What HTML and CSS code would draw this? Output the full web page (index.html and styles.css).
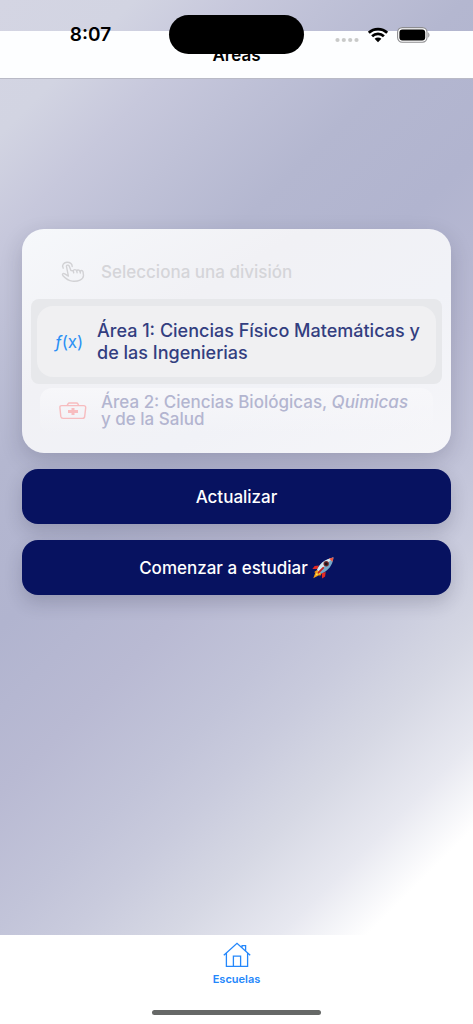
FILE: index.html
```html
<!DOCTYPE html>
<html lang="es">
<head>
<meta charset="utf-8">
<meta name="viewport" content="width=device-width, initial-scale=1">
<title>Áreas</title>
<link rel="stylesheet" href="styles.css">
</head>
<body>
<div class="app">
  <header class="navbar"><h1 class="navbar-title">Áreas</h1></header>

  <div class="status">
    <div class="status-side"><time class="clock">8:07</time></div>
    <div class="island"></div>
    <div class="status-side status-icons">
      <svg class="dots" width="24" height="6" viewBox="0 0 24 6" fill="#c9cac9"><circle cx="2.5" cy="3" r="2.1"/><circle cx="8.8" cy="3" r="2.1"/><circle cx="15.2" cy="3" r="2.1"/><circle cx="21.5" cy="3" r="2.1"/></svg>
      <svg width="22" height="16" viewBox="0 0 22 16"><g fill="none" stroke="#000" stroke-width="2.7"><path d="M1.8 5.8a13.2 13.2 0 0 1 18.4 0"/><path d="M5.1 9.3a8.5 8.5 0 0 1 11.8 0"/></g><path d="M11 15.2 7.6 11.8a4.9 4.9 0 0 1 6.8 0z"/></svg>
      <svg width="34" height="16" viewBox="0 0 34 16"><rect x=".6" y=".6" width="29.4" height="14.6" rx="4.6" fill="#fff" stroke="#8d8d90" stroke-width="1.1"/><rect x="2.4" y="2.4" width="25.8" height="11" rx="3"/><path d="M31.2 5.4c1.7.6 1.7 4.4 0 5z" fill="#9b9b9d"/></svg>
    </div>
  </div>

  <main class="content">
    <div class="picker" role="listbox" aria-label="División">
      <button class="option option-hint" type="button" role="option" aria-selected="false">
        <svg class="option-icon" width="26" height="22" viewBox="0 0 26 22" fill="none" stroke="#d2d2d5" stroke-width="1.4" stroke-linecap="round" stroke-linejoin="round"><path d="M3.2 7.2C1.3 3.6 4.3 1.4 7 1.3c3.1-.1 5.2 1.5 5.2 4.2"/><path d="m8.4 15.1-3.6-2.3c-1.9-1-3.1.6-1.8 1.9 2.3 2.5 5.2 4.9 9.2 5.4 5.8.8 11.2-1.4 11.3-5.6L23 10.7c-.4-1.6-2.6-1.7-2.9-.2-.4-1.8-3-2-3.4-.6-.5-1.7-3.2-1.7-3.4-.1L10.9 9.6 9.2 5.1C8.5 3.5 6 4 6.5 5.7z"/><path d="m13.3 9.8.4 2M16.7 9.9l.4 1.8M20.1 10.5l.3 1.5"/></svg>
        <span>Selecciona una división</span>
      </button>
      <div class="selection">
        <button class="option option-current" type="button" role="option" aria-selected="true">
          <span class="option-icon fx"><i>ƒ</i>(x)</span>
          <span>Área 1: Ciencias Físico Matemáticas y de las Ingenierias</span>
        </button>
      </div>
      <button class="option option-next" type="button" role="option" aria-selected="false">
        <svg class="option-icon" width="28" height="18" viewBox="0 0 28 18" fill="none" stroke="#f7bcbf" stroke-width="1.4"><path d="M2.8 3.6h21.9q2 0 2 2l-1 8.8q-.2 2-2.2 2H4.1q-2 0-2.3-2L.9 5.6q-.1-2 1.9-2z"/><path d="M8.3 3.4 9 1.9Q9.3 1 10.6 1h6.7q1.3 0 1.6.9l.7 1.5"/><path d="M14 6v7M9 9.5h10" stroke-width="3"/></svg>
        <span>Área 2: Ciencias Biológicas, <em>Quimicas</em><br>y de la Salud</span>
      </button>
    </div>
    <button class="action" type="button">Actualizar</button>
    <button class="action" type="button">Comenzar a estudiar
      <svg width="22" height="22" viewBox="0 0 22 22" role="img" aria-label="Cohete"><path d="m7 8.4-4.3.7L.3 12l5.3.1zM13.7 15l-.6 4.4-3 2-.3-5.3z" fill="#e32b24"/><path d="M5.7 12.5 2 15.2l1.4.3-2.1 5.7 6.2-3.1.3 1.3 2.2-4z" fill="#f39b18"/><path d="m5.8 14-2.4 4.8 4.7-2.5z" fill="#ffed4c"/><path d="M5.1 12.7C7.5 7.2 12 2.2 21.5.4c-1 8.4-5.5 13.4-12.4 16.2z" fill="#75a8c8"/><path d="M5.1 12.7C7.5 7.2 12 2.2 21.5.4L7 14.6z" fill="#d5e6ef"/><path d="M16.8 1.6 21.5.4l-.9 4.3z" fill="#eb5744"/><circle cx="14.2" cy="6.8" r="2.7" fill="#792c2c"/><circle cx="14.2" cy="6.8" r="1.6" fill="#17151c"/><path d="m11.2 10.8-5 5.1" stroke="#c62222" stroke-width="1.8" stroke-linecap="round"/></svg>
    </button>
  </main>

  <nav class="tabbar">
    <a class="tab" href="#escuelas">
      <svg width="28" height="26" viewBox="0 0 28 26" fill="none" stroke="#2487fb" stroke-width="1.3"><path d="M.8 13.3 14 1.3l13.2 12M3.4 11v13.3h21.2V11M10.4 24.3V14.1h7.2v10.2M19 5.6l.1-1.9h3.5v5.2"/></svg>
      <span>Escuelas</span>
    </a>
    <div class="home-indicator"></div>
  </nav>
</div>
</body>
</html>
```

FILE: styles.css
```css
* { box-sizing: border-box; }

body {
  margin: 0;
  font-family: Inter, "Liberation Sans", sans-serif;
}

button {
  border: 0;
  font: inherit;
  cursor: pointer;
}

.app {
  position: relative;
  display: flex;
  flex-direction: column;
  min-height: 100vh;
  padding-top: 31px;
  background: linear-gradient(135deg, #d4d5e3 0%, #d2d4e2 9%, #c7c8dc 16%, #bfc1d7 22%, #b4b7d0 31%, #b1b4cf 42%, #b9bad3 53%, #c2c4d9 62%, #c9cbdd 67%, #d6d8e4 74%, #e7e8f0 81%, #fff 87%);
}

.navbar {
  display: flex;
  justify-content: center;
  height: 48px;
  padding-top: 13px;
  background: #fdfeff;
  border-bottom: 1px solid #b9bac6;
}

.navbar-title {
  margin: 0;
  font-size: 17px;
  line-height: 22px;
  font-weight: 600;
}

/* System status bar floats over the navigation bar */
.status {
  position: absolute;
  top: 15px;
  left: 0;
  right: 0;
  display: grid;
  grid-template-columns: 1fr auto 1fr;
  align-items: center;
  height: 39px;
}

.status-side {
  display: flex;
  align-items: center;
  justify-content: center;
  padding-left: 12px;
}

.clock {
  font-size: 19px;
  line-height: 24px;
  font-weight: 600;
}

.island {
  width: 135px;
  height: 39px;
  border-radius: 20px;
  background: #000;
}

.status-icons {
  gap: 8px;
  padding: 0 12px 0 0;
  padding-right: 12px;
}

.dots { margin-top: 10px; }

.content {
  flex: 1;
  display: flex;
  flex-direction: column;
  gap: 16px;
  padding: 150px 22px 40px;
}

.picker {
  display: flex;
  flex-direction: column;
  min-height: 224px;
  padding: 15px 9px;
  border-radius: 22px;
  background: linear-gradient(150deg, #f6f8fb, #f1f1f5 35%, #f1f2f7 65%, #f6f6f9);
  box-shadow: 0 8px 22px rgba(30, 30, 50, 0.18);
}

.option {
  display: flex;
  align-items: center;
  background: transparent;
  text-align: left;
  font-weight: 600;
}

.option-icon { flex: none; }

.option-hint {
  gap: 15px;
  height: 55px;
  padding: 0 29px;
  color: #d5d5d9;
  font-size: 17px;
  line-height: 20px;
  font-weight: 500;
}

.selection {
  padding: 7px 6px;
  border-radius: 8px;
  background: #e7e8eb;
}

.option-current {
  gap: 14px;
  width: 100%;
  height: 71px;
  padding: 0 12px 0 18px;
  border-radius: 16px;
  background: #f0f0f2;
  color: #333e80;
  font-size: 18px;
  line-height: 22px;
  font-weight: 500;
}

.fx {
  width: 28px;
  color: #2b90f5;
  font-size: 17px;
  font-weight: 400;
  white-space: nowrap;
}

.option-next {
  gap: 14px;
  height: 46px;
  margin: 4px 9px 0;
  padding: 0 12px 0 19px;
  border-radius: 12px;
  background: linear-gradient(#f7f7fa, rgba(247, 247, 250, 0));
  color: #b3b5d0;
  font-size: 17px;
  line-height: 17px;
  font-weight: 500;
}

.action {
  display: flex;
  align-items: center;
  justify-content: center;
  gap: 4px;
  height: 55px;
  border-radius: 16px;
  background: #071260;
  color: #fff;
  font-size: 17px;
  font-weight: 500;
  box-shadow: 0 8px 18px rgba(30, 30, 50, 0.18);
}

.tabbar {
  display: flex;
  flex-direction: column;
  align-items: center;
  justify-content: space-between;
  height: 89px;
  padding: 7px 0 9px;
  background: #fff;
}

.tab {
  display: flex;
  flex-direction: column;
  align-items: center;
  gap: 4px;
  color: #2487fb;
  font-size: 11px;
  line-height: 14px;
  font-weight: 600;
  text-decoration: none;
}

.home-indicator {
  width: 169px;
  height: 5px;
  border-radius: 3px;
  background: #666867;
}
```
